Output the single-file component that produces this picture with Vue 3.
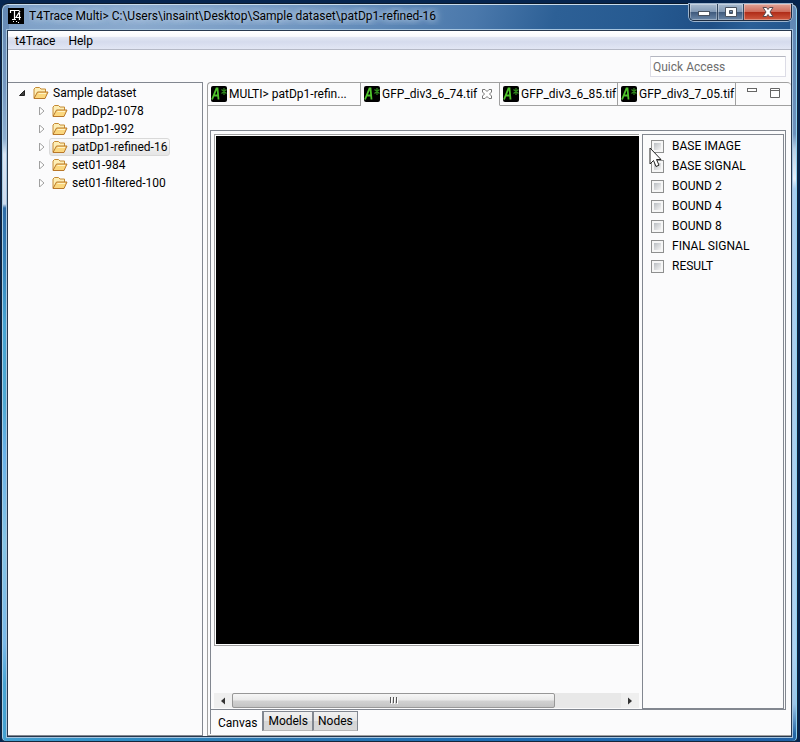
<script setup>
import { ref } from 'vue'

const folders = ['padDp2-1078', 'patDp1-992', 'patDp1-refined-16', 'set01-984', 'set01-filtered-100']
const selected = ref('patDp1-refined-16')

const files = ['MULTI> patDp1-refin...', 'GFP_div3_6_74.tif', 'GFP_div3_6_85.tif', 'GFP_div3_7_05.tif']
const activeFile = ref(1)

const layers = ref([
  { name: 'BASE IMAGE', on: false },
  { name: 'BASE SIGNAL', on: false },
  { name: 'BOUND 2', on: false },
  { name: 'BOUND 4', on: false },
  { name: 'BOUND 8', on: false },
  { name: 'FINAL SIGNAL', on: false },
  { name: 'RESULT', on: false }
])

const pages = ['Canvas', 'Models', 'Nodes']
const activePage = ref('Canvas')
const thumb = { width: '83%' }
</script>

<template>
  <div class="desktop">
    <div class="window">
      <header class="titlebar">
        <svg class="app-icon" viewBox="0 0 16 16" aria-hidden="true">
          <rect width="16" height="16" fill="#000" />
          <path d="M2.500 5V2.500h9M6.500 3v8M4 11.500h4M12 3L8 9.500h5M11.500 5v7M5 13.500h1M8 13.500h1M10 14.500h1" fill="none" stroke="#fff" stroke-width="1.200" />
        </svg>
        <h1 class="title">T4Trace Multi&gt; C:\Users\insaint\Desktop\Sample dataset\patDp1-refined-16</h1>
        <div class="controls">
          <button class="ctl min" aria-label="Minimize">
            <svg width="14" height="14" viewBox="0 0 14 14"><rect x="1.500" y="6.500" width="11" height="4" fill="#fff" stroke="#4a5360" /></svg>
          </button>
          <button class="ctl max" aria-label="Maximize">
            <svg width="14" height="14" viewBox="0 0 14 14"><path d="M1.500 2.500h11v9h-11zM5.500 5.500v3h3v-3z" fill="#fff" fill-rule="evenodd" stroke="#4a5360" /></svg>
          </button>
          <button class="ctl close" aria-label="Close">
            <svg width="14" height="14" viewBox="0 0 14 14"><path d="M2 2.500h3.500L7 4.500l1.500-2H12L9 7l3 4.500H8.500L7 9.500l-1.500 2H2L5 7z" fill="#fff" stroke="#5a4a50" /></svg>
          </button>
        </div>
      </header>

      <div class="client">
        <nav class="menubar">
          <button class="menu">t4Trace</button>
          <button class="menu">Help</button>
        </nav>
        <div class="toolbar">
          <input class="quick" type="text" placeholder="Quick Access" aria-label="Quick Access" />
        </div>

        <main class="work">
          <aside class="tree">
            <div class="node root">
              <svg class="arrow" viewBox="0 0 8 8"><path d="M6.500 1.500v5h-5z" fill="#404040" stroke="#222" /></svg>
              <button class="item">
                <svg class="folder" viewBox="0 0 16 14">
                  <path d="M1 12V3l1.500-1.500h4L8 3h4.500v3" fill="#fdeeb5" stroke="#c58a34" />
                  <path d="M1 12.500L4.500 6H15l-3 6.500z" fill="#fbd77e" stroke="#b9782a" stroke-linejoin="round" />
                  <path d="M5.500 7.500H13" stroke="#fff3c6" />
                </svg>
                Sample dataset
              </button>
            </div>
            <div v-for="f in folders" :key="f" class="node child">
              <svg class="arrow" viewBox="0 0 8 8"><path d="M2.500 0v8L7 4z" fill="#fff" stroke="#a0a0a0" /></svg>
              <button class="item" :class="{ picked: f === selected }" @click="selected = f">
                <svg class="folder" viewBox="0 0 16 14">
                  <path d="M1 12V3l1.500-1.500h4L8 3h4.500v3" fill="#fdeeb5" stroke="#c58a34" />
                  <path d="M1 12.500L4.500 6H15l-3 6.500z" fill="#fbd77e" stroke="#b9782a" stroke-linejoin="round" />
                  <path d="M5.500 7.500H13" stroke="#fff3c6" />
                </svg>
                {{ f }}
              </button>
            </div>
          </aside>

          <section class="editor">
            <div class="tabs">
              <div v-for="(f, i) in files" :key="f" class="tab" :class="{ active: i === activeFile }">
                <button class="tab-name" @click="activeFile = i">
                  <svg class="file-icon" viewBox="0 0 16 16">
                    <rect width="16" height="16" rx="2" fill="#000" />
                    <path d="M1 13.500L5.500 2.500h1l1 11M2.500 9.500h5" fill="none" stroke="#4fc32c" stroke-width="1.800" />
                    <path d="M13 2v7M10.500 3.500l5 4M15.500 3.500l-5 4" stroke="#2f8a1c" stroke-width="1.200" />
                  </svg>
                  {{ f }}
                </button>
                <button v-if="i === activeFile" class="tab-close" aria-label="Close tab">
                  <svg width="12" height="12" viewBox="0 0 12 12"><path d="M1.500 1.500h2.500L6 3.500l2-2h2.500V4l-2 2 2 2v2.500H8l-2-2-2 2H1.500V8l2-2-2-2z" fill="#fff" stroke="#777" /></svg>
                </button>
              </div>
              <div class="view-controls">
                <button aria-label="Minimize view"><svg width="12" height="12" viewBox="0 0 12 12"><rect x="1.500" y="1.500" width="9" height="3" fill="#fff" stroke="#666" /></svg></button>
                <button aria-label="Maximize view"><svg width="12" height="12" viewBox="0 0 12 12"><path d="M1.500 1.500h9v9h-9zM1.500 3.500h9" fill="#fff" stroke="#666" /></svg></button>
              </div>
            </div>

            <div class="body">
              <div class="panel">
                <div class="view">
                  <div class="canvas"></div>
                  <div class="scrollbar">
                    <button class="step" aria-label="Scroll left"><svg width="6" height="8" viewBox="0 0 6 8"><path d="M5 0.500v7L1 4z" fill="#333" /></svg></button>
                    <div class="track">
                      <div class="thumb" :style="thumb">
                        <svg width="9" height="7" viewBox="0 0 9 7"><path d="M1.500 0v6M4.500 0v6M7.500 0v6" stroke="#555" /><path d="M2.500 1v6M5.500 1v6M8.500 1v6" stroke="#fff" /></svg>
                      </div>
                    </div>
                    <button class="step" aria-label="Scroll right"><svg width="6" height="8" viewBox="0 0 6 8"><path d="M1 0.500v7L5 4z" fill="#333" /></svg></button>
                  </div>
                </div>
                <div class="layers">
                  <label v-for="l in layers" :key="l.name" class="layer">
                    <input v-model="l.on" type="checkbox" />
                    {{ l.name }}
                  </label>
                  <svg class="pointer" width="13" height="21" viewBox="0 0 13 21"><path d="M1 1v16l3.500-3.500L7 19.500l3-1.300-2.500-5.700H12z" fill="#fff" stroke="#222" /></svg>
                </div>
              </div>
              <div class="pages">
                <button v-for="p in pages" :key="p" class="page" :class="{ active: p === activePage }" @click="activePage = p">{{ p }}</button>
              </div>
            </div>
          </section>
        </main>
      </div>
    </div>
  </div>
</template>

<style>
body {
  margin: 0;
}
</style>

<style scoped>
.desktop {
  box-sizing: border-box;
  min-height: 100vh;
  display: flex;
  padding: 3px 2px 0 1px;
  background: #06254f;
  font-family: Roboto, "Open Sans", sans-serif;
  font-size: 12px;
  line-height: 18px;
  color: #000;
}
button {
  margin: 0;
  padding: 0;
  border: 0;
  background: none;
  font: inherit;
  color: inherit;
  white-space: nowrap;
}
svg {
  display: block;
  flex: none;
}
.window {
  box-sizing: border-box;
  flex: 1;
  min-width: 0;
  display: flex;
  flex-direction: column;
  padding: 0 5px 4px;
  border: 1px solid #16263a;
  border-top-color: #0b1a2c;
  border-radius: 7px 7px 5px 5px;
  box-shadow: inset 0 1px #c9dcec, inset 1px 0 #a9cde6, inset -1px 0 #8ed2f2;
  background:
    linear-gradient(#6388b3 0, #7497c0 80px, #8daed0 135px, #dbe6f4 150px, #cfdcee 200px, #2e6ba6 204px, #3583ba 260px, #46a3d2 320px, #4ea9d3 400px, #69b1e9 450px, #85c5e6 540px, #79b9ea 640px, #48a4d3 680px, #43a0d0) left / 7px 100% no-repeat,
    linear-gradient(#5f87b4 0, #6d92bd 130px, #b9cfe6 145px, #e8f0fa 175px, #a8cdf0 185px, #aed3f2 650px, #9cc5ea 700px, #2467a5 730px) right / 7px 100% no-repeat,
    linear-gradient(90deg, #45a0d0, #3190c6 12%, #2a76b0 35%, #1d6eb4 60%, #1f5fa4) bottom / 100% 8px no-repeat,
    linear-gradient(105deg, #7d9fc6 0, #8baace 14%, #6f95c0 32%, #4a78ab 48%, #2d6096 56%, #265a91 65%, #1f4f86 72%, #2a5f97 76%, #1f4f85 83%, #4a78a8 90%, #7191b8 100%);
}
.titlebar {
  display: flex;
  align-items: flex-start;
  height: 26px;
  padding-left: 1px;
}
.app-icon {
  width: 16px;
  height: 16px;
  margin-top: 4px;
}
.title {
  flex: 1;
  min-width: 0;
  margin: 3px 0 0 5px;
  font-size: 12px;
  font-weight: 400;
  line-height: 18px;
  white-space: nowrap;
  overflow: hidden;
  text-shadow: 0 0 6px #c7d8ea, 0 0 8px #b3c9e0, 0 0 10px #a6bfda;
}
.controls {
  display: flex;
  box-sizing: border-box;
  height: 17px;
  border: 1px solid #1c2b40;
  border-top: 0;
  border-radius: 0 0 5px 5px;
  overflow: hidden;
  box-shadow: 0 0 0 1px #9db4cd;
}
.ctl {
  display: flex;
  align-items: center;
  justify-content: center;
  width: 28px;
  background: linear-gradient(#a9bbcf, #8299b5 48%, #3f5a7d 52%, #6b87a8);
  border-right: 1px solid #33475f;
  box-shadow: inset 0 0 0 1px #ffffff55;
}
.ctl.max {
  width: 26px;
}
.ctl.close {
  width: 47px;
  border-right: 0;
  background: linear-gradient(#e0a397, #cf6d5c 48%, #b02c18 52%, #cf5a40);
}
.client {
  flex: 1;
  min-height: 0;
  display: flex;
  flex-direction: column;
  border: 1px solid #27384e;
  background: #fbfbfc;
  box-shadow: 0 0 0 1px #a5c4df;
}
.menubar {
  display: flex;
  gap: 13px;
  padding-left: 7px;
  height: 18px;
  border-bottom: 1px solid #b5b9c6;
  background: linear-gradient(#fff 0, #f8f9fc 30%, #e3e7f3 34%, #d5dbed 60%, #e2e6f4 100%);
}
.menu {
  line-height: 20px;
}
.toolbar {
  display: flex;
  justify-content: flex-end;
  align-items: center;
  height: 32px;
  padding-right: 5px;
}
.quick {
  box-sizing: border-box;
  width: 136px;
  height: 21px;
  padding: 1px 2px 0;
  border: 1px solid #dcdce6;
  border-top-color: #b4b6c0;
  background: #fff;
  font: inherit;
}
.quick::placeholder {
  color: #6d6d6d;
  opacity: 1;
}
.work {
  flex: 1;
  display: flex;
  gap: 4px;
}
.tree {
  box-sizing: border-box;
  flex: none;
  width: 195px;
  padding-top: 1px;
  border: 1px solid #828790;
  border-left: 0;
}
.node {
  display: flex;
  align-items: center;
  height: 18px;
  padding-left: 10px;
}
.node.child {
  padding-left: 29px;
}
.arrow {
  width: 8px;
  height: 8px;
  margin-right: 4px;
}
.item {
  box-sizing: border-box;
  display: flex;
  align-items: center;
  gap: 4px;
  height: 18px;
  padding: 0 2px;
  border: 1px solid transparent;
  border-radius: 3px;
  line-height: 16px;
}
.item.picked {
  border-color: #d9d9d9;
  background: linear-gradient(#fafafa, #e5e5e5);
}
.folder {
  width: 16px;
  height: 14px;
}
.editor {
  flex: 1;
  min-width: 0;
  display: flex;
  flex-direction: column;
  border: 1px solid #a0a0a0;
  border-right: 0;
  border-radius: 4px 4px 0 0;
}
.tabs {
  display: flex;
  height: 23px;
}
.tab {
  box-sizing: border-box;
  display: flex;
  align-items: center;
  justify-content: space-between;
  flex: none;
  width: 118px;
  padding: 0 0 0 3px;
  border-right: 1px solid #a0a0a0;
  border-bottom: 1px solid #a0a0a0;
}
.tab:first-child {
  width: 153px;
}
.tab.active {
  width: 139px;
  padding-right: 6px;
  border-bottom-color: transparent;
}
.tab-name {
  display: flex;
  align-items: center;
  gap: 2px;
}
.file-icon {
  width: 16px;
  height: 16px;
}
.view-controls {
  flex: 1;
  display: flex;
  justify-content: flex-end;
  align-items: flex-start;
  gap: 11px;
  padding: 4px 10px 0 0;
  border-bottom: 1px solid #a0a0a0;
}
.body {
  flex: 1;
  display: flex;
  flex-direction: column;
  padding: 24px 5px 1px 2px;
}
.panel {
  flex: 1;
  display: flex;
  gap: 3px;
  padding: 3px 1px 0 3px;
  border: 1px solid #828790;
}
.view {
  flex: 1;
  min-width: 0;
  display: flex;
  flex-direction: column;
}
.canvas {
  flex: 1;
  margin-bottom: 47px;
  border: 1px solid #a0a0a0;
  border-right: 0;
  background: #000;
  box-shadow: inset 1px 1px #fff, inset 0 -1px #fff;
}
.scrollbar {
  display: flex;
  height: 15px;
  margin-bottom: 1px;
  background: #e8e8e8;
}
.step {
  display: flex;
  align-items: center;
  justify-content: center;
  width: 18px;
  background: #efefef;
}
.track {
  flex: 1;
}
.thumb {
  box-sizing: border-box;
  display: flex;
  align-items: center;
  justify-content: center;
  height: 15px;
  border: 1px solid #979797;
  border-radius: 2px;
  background: linear-gradient(#f6f6f6, #e9e9e9 48%, #d2d2d2 52%, #c4c4c4);
}
.layers {
  position: relative;
  box-sizing: border-box;
  width: 142px;
  padding: 1px 0 0 8px;
  border: 1px solid #828790;
}
.layer {
  display: flex;
  align-items: center;
  gap: 8px;
  height: 20px;
}
.layer input {
  appearance: none;
  box-sizing: border-box;
  width: 13px;
  height: 13px;
  margin: 0;
  border: 1px solid #8e8f8f;
  background: linear-gradient(135deg, #b9bdc2, #f4f4f4) content-box, #f6f6f6;
  padding: 2px;
}
.layer input:checked {
  background: linear-gradient(#31579c, #31579c) content-box, #f6f6f6;
}
.pointer {
  position: absolute;
  top: 12px;
  left: 6px;
}
.pages {
  display: flex;
  align-items: flex-start;
  height: 24px;
}
.page {
  box-sizing: border-box;
  height: 20px;
  padding: 0 4px;
  border: 1px solid #828790;
  border-left-width: 2px;
  border-bottom-color: #b8b8b8;
  background: linear-gradient(#f1f1f1, #e6e6e6 48%, #d5d5d5 52%, #d8d8d8);
  margin-top: 1px;
  margin-right: -1px;
}
.page.active {
  height: 24px;
  margin-top: 0;
  padding: 1px 6px 0 7px;
  border-width: 0 0 0 1px;
  background: #fbfbfc;
}
</style>
